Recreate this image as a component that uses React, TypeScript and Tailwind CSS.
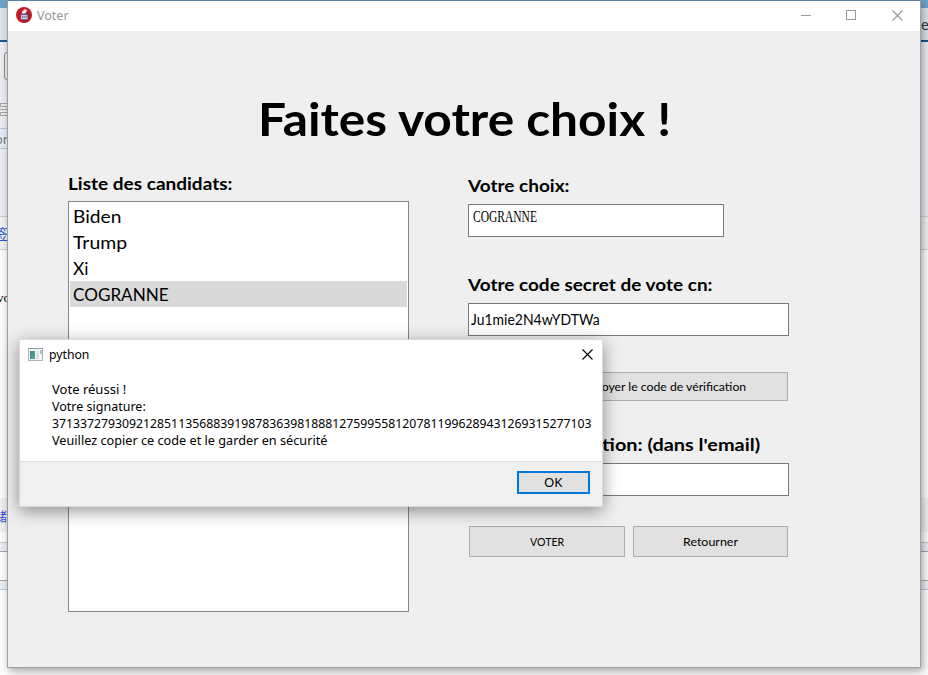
import { useLayoutEffect, useRef, useState } from 'react';

type FitProps = { w: number; className?: string; children: string };

// One line of text condensed or expanded to a fixed advance width.
function Fit({ w, className = '', children }: FitProps) {
  const ref = useRef<HTMLSpanElement>(null);
  const [scale, setScale] = useState(1);
  useLayoutEffect(() => {
    if (ref.current) setScale(w / ref.current.offsetWidth);
  }, [w]);
  return (
    <span className="block shrink-0" style={{ width: w }}>
      <span
        ref={ref}
        className={`block w-max origin-left whitespace-pre ${className}`}
        style={{ transform: `scaleX(${scale})` }}
      >
        {children}
      </span>
    </span>
  );
}

const candidates = [
  { name: 'Biden', w: 48 },
  { name: 'Trump', w: 54 },
  { name: 'Xi', w: 15.5 },
  { name: 'COGRANNE', w: 96 },
];

function Backdrop() {
  return (
    <div className="flex h-full flex-col bg-[#fcfcfc] font-['Noto_Sans',sans-serif]">
      <div className="h-2 bg-[#6fa1cc]" />
      <div className="flex h-8 items-center justify-end bg-[#d9e5ee] text-[14px] text-[#333]">
        <span className="w-[7px]">e</span>
      </div>
      <div className="h-0.5 bg-[#0d5a9c]" />
      <div className="h-[174px] bg-[#ecedf2] pt-2.5">
        <div className="ml-1 h-7 w-8 rounded-[3px] border border-[#8a8a8a] bg-[#f0f0f0]" />
        <div className="mt-[23px] flex w-8 flex-col gap-0.5">
          <div className="h-1 border border-[#a5a5a5]" />
          <div className="h-px bg-[#a5a5a5]" />
          <div className="h-1 border border-[#a5a5a5]" />
        </div>
        <div className="mt-[12px] h-[21px] w-8 border-y border-[#a9c9e2] bg-[#e4edf6]">
          <span className="-ml-[5px] block text-[13px] leading-[20px] text-[#777]">or</span>
        </div>
      </div>
      <div className="h-[34px] border-y border-[#cfcfcf] bg-[#f0f0f0]">
        <span className="-ml-1.5 block w-4 font-['Noto_Sans_CJK_SC',sans-serif] text-[14px] leading-8 text-[#1d5fd0]">签</span>
      </div>
      <div className="h-[248px] pt-10">
        <span className="-ml-[3px] block font-['Liberation_Serif',serif] text-[13px] leading-4 text-black">vo</span>
      </div>
      <div className="h-[34px] bg-[#efefef]">
        <span className="-ml-1.5 block w-4 font-['Noto_Sans_CJK_SC',sans-serif] text-[13px] leading-[35px] text-[#3c55d8]">储</span>
      </div>
      <div className="h-[10px]" />
      <div className="h-[10px] border-t border-b border-t-[#b9cfdd] border-b-[#a5a5a5] bg-[#e9ecf1]" />
      <div className="h-7" />
      <div className="h-[10px] border-t border-b border-t-[#a5a5a5] border-b-[#b9cfdd] bg-[#e9ecf1]" />
    </div>
  );
}

function BallotIcon() {
  return (
    <svg width="16" height="16" viewBox="0 0 16 16" className="shrink-0">
      <circle cx="8" cy="8" r="8" fill="#c51a24" />
      <path d="M12 5 15 9 12 14 8 15.5 6 12Z" fill="#98232b" />
      <path d="M6 4.4 8.7 1.9 11.2 3.2 9 7H6Z" fill="#f8eeee" />
      <path d="m6.2 5 2.2-1.5" stroke="#c88" strokeWidth=".7" />
      <path d="M4.4 6.5h7.4v1.6H4.4Z" fill="#52509c" />
      <path d="M5 8.1h6.5v4.7H5Z" fill="#d7d8e9" />
      <path d="M5.8 9.3h1.4v1.4H5.8Zm2 0h1v1.4h-1Zm1.7 0h1.2v1.4H9.5Z" fill="#4c4b91" />
      <path d="M5 12h6.5v1H5Z" fill="#6968a6" />
    </svg>
  );
}

function AppIcon() {
  return (
    <svg width="15" height="14" viewBox="0 0 15 14" shapeRendering="crispEdges" className="shrink-0">
      <defs>
        <linearGradient id="pane" x1="0" y1="0" x2="1" y2="1">
          <stop offset="0" stopColor="#3d7f9f" />
          <stop offset="1" stopColor="#5cab7f" />
        </linearGradient>
      </defs>
      <rect x=".5" y=".5" width="14" height="12" fill="#f4f5f6" stroke="#aeb4ba" />
      <path d="M0 .5h15" stroke="#939da6" />
      <rect x="2" y="3" width="5" height="8" fill="url(#pane)" />
      <rect x="8" y="3" width="3" height="8" fill="#e1e4e7" />
      <rect x="12" y="2" width="2" height="4" fill="#a1c9c2" />
    </svg>
  );
}

function Cross({ className }: { className: string }) {
  return (
    <svg width="11" height="11" viewBox="0 0 11 11" className={className}>
      <path d="m.5.5 10 10M10.5.5l-10 10" stroke="currentColor" fill="none" strokeWidth="1.1" />
    </svg>
  );
}

const label = 'text-[17.5px] leading-6 font-bold';
const button = 'flex items-center justify-center border border-[#adadad] bg-[#e1e1e1]';
const field = 'flex h-[33px] border border-[#7a7a7a] bg-white';

function VoteWindow() {
  return (
    <div className="flex h-full flex-col bg-[#efefef] font-['Lato',sans-serif] text-black">
      <header className="flex h-[30px] shrink-0 items-center bg-white pb-0.5 pl-2 text-[#999]">
        <BallotIcon />
        <div className="ml-[5px] pt-px font-['Noto_Sans',sans-serif]">
          <Fit w={32} className="text-[12.5px] leading-5">Voter</Fit>
        </div>
        <div className="ml-auto flex items-center pr-[17px]">
          <div className="h-px w-[10px] bg-[#999]" />
          <div className="ml-[35px] h-[10px] w-[10px] border border-[#999]" />
          <Cross className="ml-[36px] text-[#999]" />
        </div>
      </header>
      <h1 className="mt-[59px] flex h-14 justify-center pl-px">
        <Fit w={413} className="text-[46.5px] leading-[56px] font-bold">Faites votre choix !</Fit>
      </h1>
      <main className="flex gap-[59px] pl-[60px]">
        <section className="w-[341px] pt-[26px]">
          <Fit w={164} className={label}>Liste des candidats:</Fit>
          <ul className="mt-[5px] h-[411px] border border-[#828790] bg-white p-px">
            {candidates.map((c) => (
              <li key={c.name} className="flex h-[26px] items-center pl-[2.5px] last:bg-[#d9d9d9]">
                <Fit w={c.w} className="text-[18px] leading-[26px]">{c.name}</Fit>
              </li>
            ))}
          </ul>
        </section>
        <section className="flex w-[321px] flex-col pt-7">
          <Fit w={101} className={label}>Votre choix:</Fit>
          <div className={`${field} mt-1.5 w-64 pt-0.5 pl-[3.5px]`}>
            <Fit w={64} className="font-['Liberation_Serif',serif] text-[16px] leading-5">COGRANNE</Fit>
          </div>
          <div className="mt-9">
            <Fit w={244} className={label}>Votre code secret de vote cn:</Fit>
          </div>
          <div className={`${field} mt-1.5 items-center pl-0.5`}>
            <Fit w={129} className="text-[14.5px] leading-5">Ju1mie2N4wYDTWa</Fit>
          </div>
          <div className={`${button} mt-9 mr-px ml-[72px] h-[29px]`}>
            <Fit w={164} className="text-[12px] leading-5">Envoyer le code de vérification</Fit>
          </div>
          <div className="mt-8 -ml-2">
            <Fit w={300} className={label}>Code de vérification: (dans l'email)</Fit>
          </div>
          <div className={`${field} mt-1.5`} />
          <div className="mt-[30px] flex gap-2 pl-px">
            <div className={`${button} h-[31px] w-[156px]`}>
              <Fit w={34.5} className="text-[12px] leading-5">VOTER</Fit>
            </div>
            <div className={`${button} h-[31px] w-[155px]`}>
              <Fit w={55} className="text-[12px] leading-5">Retourner</Fit>
            </div>
          </div>
        </section>
      </main>
    </div>
  );
}

function MessageBox() {
  return (
    <div className="flex h-full flex-col bg-white font-['Noto_Sans',sans-serif] text-[12.5px] leading-[17px] text-black">
      <header className="flex h-[29px] items-center pl-2">
        <AppIcon />
        <div className="ml-1.5">
          <Fit w={40}>python</Fit>
        </div>
        <Cross className="mr-[9px] mb-px ml-auto" />
      </header>
      <div className="pt-[12px] pl-8">
        <Fit w={74}>Vote réussi !</Fit>
        <Fit w={94}>Votre signature:</Fit>
        <Fit w={540}>37133727930921285113568839198783639818881275995581207811996289431269315277103</Fit>
        <Fit w={275}>Veuillez copier ce code et le garder en sécurité</Fit>
      </div>
      <footer className="mt-auto flex h-[45px] justify-end border-t border-[#dfdfdf] bg-[#f0f0f0] pt-[9px] pr-3">
        <div className="flex h-[23px] w-[73px] items-center justify-center border-2 border-[#0078d7] bg-[#e1e1e1]">
          <Fit w={19}>OK</Fit>
        </div>
      </footer>
    </div>
  );
}

export default function App() {
  return (
    <div className="relative h-[675px] w-[928px] overflow-hidden">
      <Backdrop />
      <div className="absolute top-0 left-[7px] h-[668px] w-[914px] border border-[#a0a0a0] border-t-[#5f7f9f] shadow-[2px_3px_8px_rgba(0,0,0,0.35)]">
        <VoteWindow />
      </div>
      <div className="absolute top-[339px] left-[19px] h-[168px] w-[584px] border border-[#dadada] shadow-[0_4px_16px_rgba(0,0,0,0.42)]">
        <MessageBox />
      </div>
    </div>
  );
}
